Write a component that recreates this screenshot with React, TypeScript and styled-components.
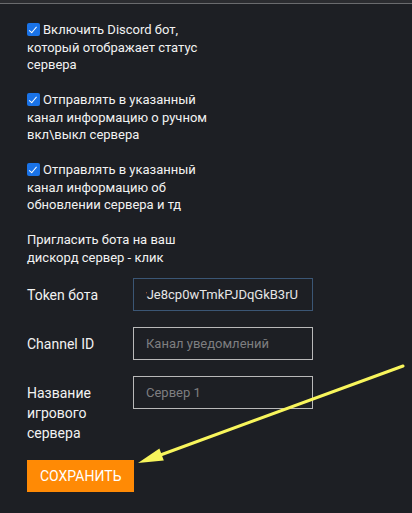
import React from "react"
import styled, {createGlobalStyle} from "styled-components"

const GlobalStyle = createGlobalStyle`
    html, body {
        margin: 0;
        padding: 0;
        background: #1d1f24;
    }
    body {
        font-family: Roboto, "Liberation Sans", Arial, sans-serif;
        color: #f2f2f2;
    }
`

const Page = styled.div`
    position: relative;
    width: 412px;
    height: 513px;
    overflow: hidden;
    background: #1d1f24;
`

const TopBar = styled.div`
    height: 3px;
    background: #2b2c30;
    border-bottom: 1px solid #6a6b6e;
`

const Content = styled.div`
    display: flex;
    flex-direction: column;
    padding: 17px 0 0 27px;
`

const Options = styled.div`
    display: flex;
    flex-direction: column;
    gap: 17.5px;
    width: 186px;
    margin-bottom: 12px;
`

const Text = styled.p`
    margin: 0;
    font-size: 13px;
    line-height: 17.5px;
`

const Check = styled.input.attrs({type: "checkbox"})`
    appearance: none;
    width: 13px;
    height: 13px;
    margin: 0 3px 0 0;
    border-radius: 2px;
    background: #1a73e8;
    vertical-align: -2px;
    position: relative;

    &:checked::after {
        content: "";
        position: absolute;
        left: 4px;
        top: 1.5px;
        width: 3px;
        height: 6.5px;
        border: solid #fff;
        border-width: 0 1.6px 1.6px 0;
        transform: rotate(40deg);
    }
`

const Form = styled.div`
    display: flex;
    flex-direction: column;
    gap: 16px;
`

const Row = styled.div`
    display: flex;
    align-items: flex-start;
`

const Label = styled.label`
    width: 106px;
    padding-top: 7px;
    font-size: 14px;
    line-height: 20px;
`

const Input = styled.input<{$active?: boolean}>`
    box-sizing: border-box;
    width: 180px;
    height: 33px;
    padding: 0 14px 0 12px;
    background: transparent;
    border: 1px solid ${p => p.$active ? "#3b5675" : "#b9b9b9"};
    color: #e6e6e6;
    font-family: Roboto, "Liberation Sans", Arial, sans-serif;
    font-size: 13px;
    outline: none;
    direction: ${p => p.$active ? "rtl" : "ltr"};

    &::placeholder {
        color: #7e7e80;
    }
`

const SaveButton = styled.button`
    align-self: flex-start;
    margin-top: 1px;
    height: 32px;
    padding: 0 13px;
    background: #ff8a05;
    border: none;
    color: #fff;
    font-family: Roboto, "Liberation Sans", Arial, sans-serif;
    font-size: 14px;
    text-transform: uppercase;
    cursor: pointer;
`

const ArrowLayer = styled.svg`
    position: absolute;
    left: 0;
    top: 0;
    pointer-events: none;
`

const App: React.FC = () => (
    <Page>
        <GlobalStyle />
        <TopBar />
        <Content>
            <Options>
                <Text>
                    <Check defaultChecked />
                    Включить Discord бот, который отображает статус сервера
                </Text>
                <Text>
                    <Check defaultChecked />
                    Отправлять в указанный канал информацию о ручном вкл\выкл сервера
                </Text>
                <Text>
                    <Check defaultChecked />
                    Отправлять в указанный канал информацию об обновлении сервера и тд
                </Text>
                <Text>Пригласить бота на ваш дискорд сервер - клик</Text>
            </Options>
            <Form>
                <Row>
                    <Label>Token бота</Label>
                    <Input $active readOnly value="NzY5MTk2vJe8cp0wTmkPJDqGkB3rU" />
                </Row>
                <Row>
                    <Label>Channel ID</Label>
                    <Input placeholder="Канал уведомлений" />
                </Row>
                <Row>
                    <Label>Название игрового сервера</Label>
                    <Input placeholder="Сервер 1" />
                </Row>
                <SaveButton>Сохранить</SaveButton>
            </Form>
        </Content>
        <ArrowLayer width="412" height="513" viewBox="0 0 412 513">
            <line x1="403" y1="366" x2="155" y2="457" stroke="#f8f55c" strokeWidth="3" strokeLinecap="round" />
            <polygon points="138,463 159.4,448.5 163.8,460.5" fill="#f8f55c" />
        </ArrowLayer>
    </Page>
)

export default App
